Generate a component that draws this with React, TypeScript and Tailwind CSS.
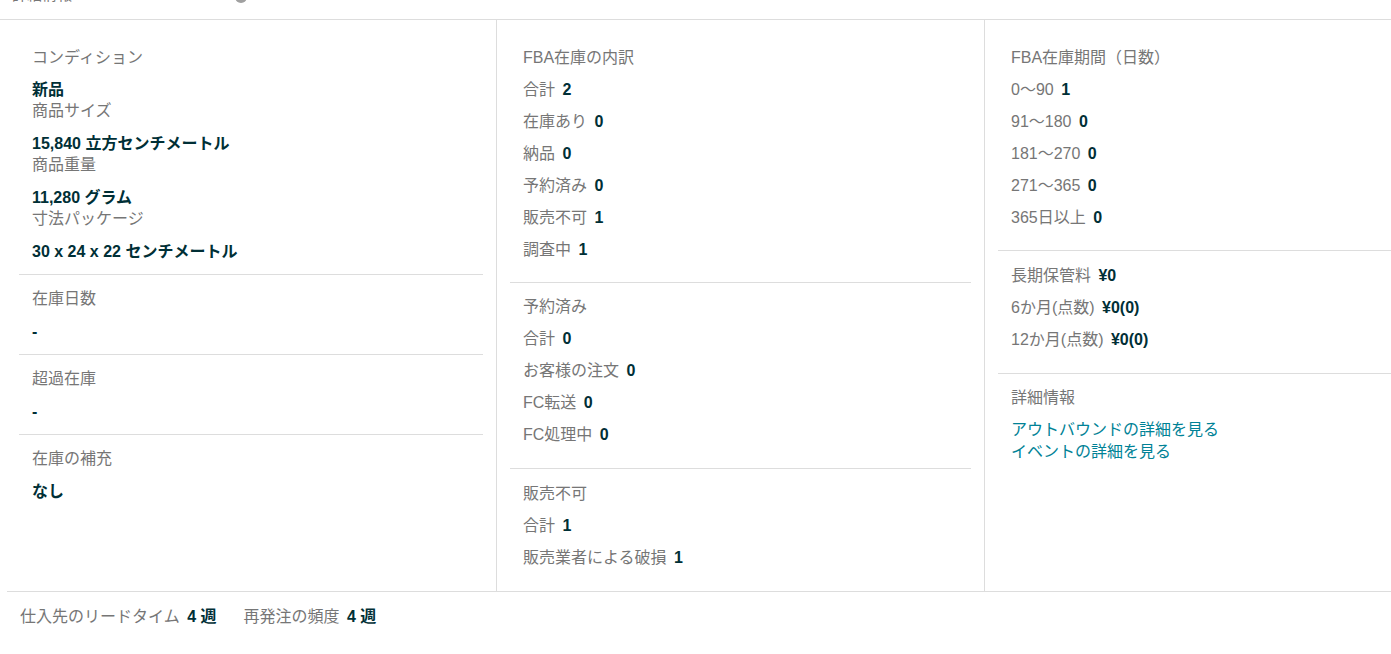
import React from "react";

type Row = { label: string; value: string };

const font = { fontFamily: '"Liberation Sans", Arial, "Noto Sans CJK JP", sans-serif' };

function Section({
  title,
  rows,
  last,
  pt = "pt-[13px]",
  pb = "pb-[22px]",
  children,
}: {
  title: string;
  rows?: Row[];
  last?: boolean;
  pt?: string;
  pb?: string;
  children?: React.ReactNode;
}) {
  return (
    <div className={`px-[13px] ${pt} ${last ? "" : `border-b border-[#dddddd] ${pb}`}`}>
      <div className="text-[#767676]">{title}</div>
      {rows?.map((r) => (
        <div key={r.label} className="mt-[11px]">
          <span className="text-[#767676]">{r.label}</span>{" "}
          <span className="ml-[3px] font-bold text-[#002f36]">{r.value}</span>
        </div>
      ))}
      {children}
    </div>
  );
}

// label over value, used in the first column
function Pair({ label, value, first }: { label: string; value: string; first?: boolean }) {
  return (
    <>
      <div className="text-[#767676]">{label}</div>
      <div className={`${first ? "mt-[11px]" : "mt-[12px]"} font-bold text-[#002f36]`}>{value}</div>
    </>
  );
}

export default function App() {
  return (
    <div className="w-full min-h-screen overflow-hidden bg-white text-[16px] leading-[21px]" style={font}>
      {/* cut-off header strip */}
      <div className="h-[20px] overflow-hidden border-b border-[#dddddd]">
        <div className="-mt-[16px] flex items-start pl-[12px]">
          <span className="text-[15px] text-[#767676]">詳細情報</span>
          <svg className="ml-[163px] mt-[7px]" width="12" height="12" viewBox="0 0 12 12">
            <circle cx="6" cy="6" r="6" fill="#a0a0a0" />
          </svg>
        </div>
      </div>

      <div className="pl-[7px]">
        <div className="flex border-b border-[#dddddd]">
          {/* column 1 */}
          <div className="w-[490px] shrink-0 border-r border-[#dddddd] pl-[12px] pr-[13px] pt-[14px]">
            <div className="border-b border-[#dddddd] px-[13px] pt-[13px] pb-[12px]">
              <Pair label="コンディション" value="新品" first />
              <Pair label="商品サイズ" value="15,840 立方センチメートル" />
              <Pair label="商品重量" value="11,280 グラム" />
              <Pair label="寸法パッケージ" value="30 x 24 x 22 センチメートル" />
            </div>
            <div className="border-b border-[#dddddd] px-[13px] pt-[13px] pb-[12px]">
              <Pair label="在庫日数" value="-" />
            </div>
            <div className="border-b border-[#dddddd] px-[13px] pt-[13px] pb-[12px]">
              <Pair label="超過在庫" value="-" />
            </div>
            <div className="px-[13px] pt-[13px]">
              <Pair label="在庫の補充" value="なし" />
            </div>
          </div>

          {/* column 2 */}
          <div className="w-[488px] shrink-0 border-r border-[#dddddd] px-[13px] pt-[14px] pb-[23px]">
            <Section
              title="FBA在庫の内訳"
              rows={[
                { label: "合計", value: "2" },
                { label: "在庫あり", value: "0" },
                { label: "納品", value: "0" },
                { label: "予約済み", value: "0" },
                { label: "販売不可", value: "1" },
                { label: "調査中", value: "1" },
              ]}
            />
            <Section
              title="予約済み"
              pb="pb-[23px]"
              rows={[
                { label: "合計", value: "0" },
                { label: "お客様の注文", value: "0" },
                { label: "FC転送", value: "0" },
                { label: "FC処理中", value: "0" },
              ]}
            />
            <Section
              title="販売不可"
              last
              pt="pt-[14px]"
              rows={[
                { label: "合計", value: "1" },
                { label: "販売業者による破損", value: "1" },
              ]}
            />
          </div>

          {/* column 3 */}
          <div className="flex-1 pl-[13px] pt-[14px]">
            <Section
              title="FBA在庫期間（日数）"
              rows={[
                { label: "0〜90", value: "1" },
                { label: "91〜180", value: "0" },
                { label: "181〜270", value: "0" },
                { label: "271〜365", value: "0" },
                { label: "365日以上", value: "0" },
              ]}
            />
            <div className="border-b border-[#dddddd] px-[13px] pt-[14px] pb-[23px]">
              <div>
                <span className="text-[#767676]">長期保管料</span>{" "}
                <span className="ml-[3px] font-bold text-[#002f36]">¥0</span>
              </div>
              <div className="mt-[11px]">
                <span className="text-[#767676]">6か月(点数)</span>{" "}
                <span className="ml-[3px] font-bold text-[#002f36]">¥0(0)</span>
              </div>
              <div className="mt-[11px]">
                <span className="text-[#767676]">12か月(点数)</span>{" "}
                <span className="ml-[3px] font-bold text-[#002f36]">¥0(0)</span>
              </div>
            </div>
            <Section title="詳細情報" last>
              <div className="mt-[11px] flex flex-col leading-[22px] text-[#008296]">
                <a href="#" className="hover:underline">アウトバウンドの詳細を見る</a>
                <a href="#" className="hover:underline">イベントの詳細を見る</a>
              </div>
            </Section>
          </div>
        </div>

        {/* footer */}
        <div className="flex gap-[27px] pl-[13px] pt-[14px]">
          <div>
            <span className="text-[#767676]">仕入先のリードタイム</span>{" "}
            <span className="ml-[3px] font-bold text-[#002f36]">4 週</span>
          </div>
          <div>
            <span className="text-[#767676]">再発注の頻度</span>{" "}
            <span className="ml-[3px] font-bold text-[#002f36]">4 週</span>
          </div>
        </div>
      </div>
    </div>
  );
}
